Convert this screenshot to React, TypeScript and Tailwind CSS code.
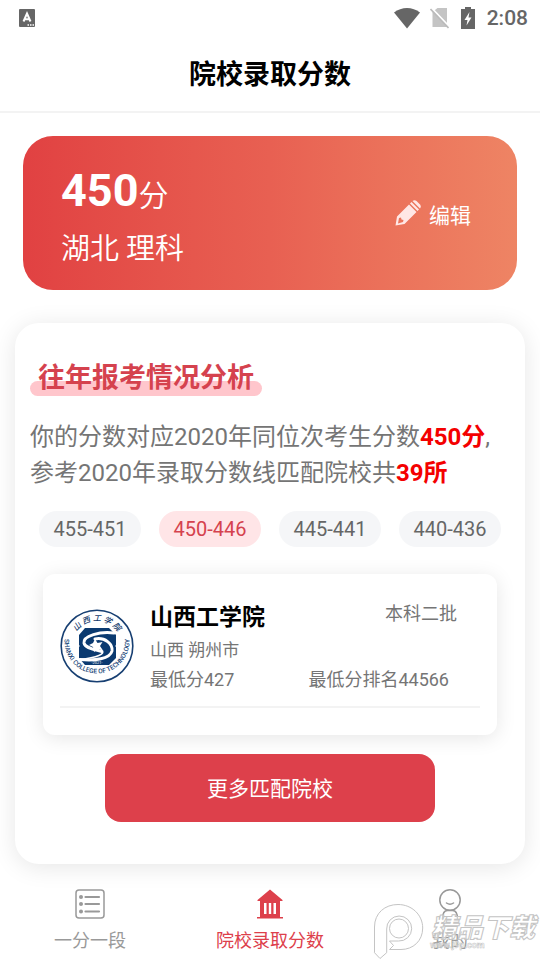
import { useState } from "react";

const ranges = ["455-451", "450-446", "445-441", "440-436"];

function StatusBar() {
  return (
    <div className="flex h-9 items-center justify-between pl-[19px] pr-3 text-[#666]">
      <svg width="16" height="18" viewBox="0 0 16 18">
        <rect width="16" height="18" rx="1" fill="#666" />
        <path d="M4.500 12.500 8 4.500l3.500 8M5.500 10.200h5" fill="none" stroke="#fff" strokeWidth="2" />
        <path d="M8.500 16h1.500m1 0h1.500m1 0h1.500" stroke="#fff" strokeWidth="1.400" />
      </svg>
      <div className="flex items-center">
        <svg width="26" height="22" viewBox="0 0 26 22">
          <path d="M0 5.500C7.500-.5 18.500-.5 26 5.500L13 21.500Z" fill="#666" />
        </svg>
        <svg className="ml-2.5" width="19" height="22" viewBox="0 0 19 22">
          <path d="M2.500 5 7.500 1H17v19H2.500Z" fill="#c4c4c4" />
          <path d="M1 .5 19.500 20" stroke="#fff" strokeWidth="2" />
          <path d="M.5 2 18.500 21" stroke="#bbb" strokeWidth="1.600" />
        </svg>
        <svg className="ml-3" width="14" height="22" viewBox="0 0 14 22">
          <path d="M4 0h6v2h4v20H0V2h4Z" fill="#666" />
          <path d="M8.500 5 3.500 13H6.500L5.500 18.500l5-8h-3Z" fill="#fff" />
        </svg>
        <span className="ml-3 text-[21px] font-medium leading-6">2:08</span>
      </div>
    </div>
  );
}

function PencilIcon() {
  return (
    <svg width="26" height="26" viewBox="0 0 26 26" fill="#ffe7e5">
      <path
        fillRule="evenodd"
        d="M.5 25.500 2 16.500 14 4.500l7.500 7.500-12 12ZM4 18l-1 5.500 5-1.500.5-2-2-.5-.5-2Z"
      />
      <path d="m15 3.500 1.500-1.500 7.500 7.500-1.500 1.500Z" />
      <path d="M17.500 1q2-1.500 4 0L25 4.500q1.500 2 0 4Z" />
    </svg>
  );
}

function CollegeLogo() {
  return (
    <svg className="mt-[7px] shrink-0" width="74" height="74" viewBox="0 0 74 74">
      <circle cx="37" cy="37" r="35.800" fill="#fff" stroke="#173f72" strokeWidth="1.600" />
      <path d="M25 19h24l7 7v23l-7 7H25l-6-7V26Z" fill="#0b3a70" />
      <g fill="none" stroke="#fff" strokeLinecap="round">
        <path d="M54 24C40 22 23 27 24 34c1 5 9 6 18 8.500" strokeWidth="3" />
        <path d="M35 30c10-2 18 5 17 12-2 8-17 10-32 8.500" strokeWidth="3" />
        <path d="M42 42.500c3 2-4 6-22 8" strokeWidth="1.500" />
        <path d="M19 37h-3M56 37h3" strokeWidth="1.500" />
      </g>
      <path d="m35 30 2.500 4 5-1-2.500 4 3 4.500-5-1.500-4 3-1-5-4-2 4-2Z" fill="#fff" />
      <text x="37" y="55" textAnchor="middle" fontSize="4" fill="#fff">·2021·</text>
      <defs>
        <path id="ring-top" d="M12 37a25 25 0 0 1 50 0" />
        <path id="ring-bottom" d="M4.500 32a32.500 32.500 0 0 0 65 0" />
      </defs>
      <text fontSize="8" fontWeight="500" fill="#12396c" fontStyle="italic">
        <textPath href="#ring-top" startOffset="50%" textAnchor="middle">
          山 西 工 学 院
        </textPath>
      </text>
      <text fontSize="6.500" fontWeight="500" fill="#23487a">
        <textPath href="#ring-bottom" startOffset="50%" textAnchor="middle">
          SHANXI COLLEGE OF TECHNOLOGY
        </textPath>
      </text>
    </svg>
  );
}

function ListIcon() {
  return (
    <svg width="30" height="30" viewBox="0 0 30 30" fill="none" stroke="#999" strokeLinecap="round">
      <rect x="1" y="1" width="28" height="28" rx="3" strokeWidth="1.500" />
      <path d="M10.500 8H24M10.500 15H24M10.500 22.500H24" strokeWidth="2.200" />
      <path d="M6 8h.01M6 15h.01M6 22.500h.01" strokeWidth="4" />
    </svg>
  );
}

function SchoolIcon() {
  return (
    <svg width="30" height="30" viewBox="0 0 30 30">
      <path
        fillRule="evenodd"
        fill="#dd404b"
        d="M15 .5 27.500 11v1H25v16h3v1.500H2V28h3V12H2.500v-1ZM9 14v11h2.500V14Zm4.800 0v11h2.400V14Zm4.700 0v11H21V14Z"
      />
    </svg>
  );
}

function UserIcon() {
  return (
    <svg width="30" height="30" viewBox="0 0 30 30" fill="none" stroke="#999" strokeWidth="1.500" strokeLinecap="round">
      <circle cx="15" cy="11" r="10.200" />
      <path d="M11.500 14q3.500 2.500 7 0M7.500 30c0-6 2-8.500 5-8.500h5c3 0 5 2.500 5 8.500" />
    </svg>
  );
}

function Watermark() {
  return (
    <svg
      className="pointer-events-none absolute bottom-0 right-0"
      width="168"
      height="60"
      viewBox="0 0 168 60"
      fill="#fff"
      fillOpacity="0.55"
      stroke="#c4c4c4"
      strokeWidth="1"
    >
      <path d="M2.500 51.700V26C2.500 12 13 3.500 26 3.500c14 0 24.700 10.500 24.700 23.500S41 48.500 29 48.500H17.500l4-4-4-4.500h9A12.500 12.500 0 1 0 14.700 28v23.700L8 57.500Z" />
      <circle cx="27" cy="27.500" r="9.500" />
      <text x="59" y="36" fontSize="26" fontWeight="900" fontStyle="italic">精品下载</text>
      <text x="58" y="47" fontSize="9" strokeWidth="0.500" fontWeight="700">www.j9p.com</text>
    </svg>
  );
}

const tabs = [
  { label: "一分一段", icon: <ListIcon /> },
  { label: "院校录取分数", icon: <SchoolIcon /> },
  { label: "我的", icon: <UserIcon /> },
];

export default function App() {
  const [range, setRange] = useState("450-446");
  const [tab, setTab] = useState("院校录取分数");

  return (
    <div className="flex min-h-screen flex-col bg-white font-[Roboto,'Noto_Sans_CJK_SC',sans-serif] text-[#757575]">
      <StatusBar />
      <header className="border-b-2 border-[#f3f3f3] pb-[17px] pt-5">
        <h1 className="text-center text-[27px] font-bold leading-[38px] text-black">院校录取分数</h1>
      </header>

      <main className="flex-1">
        <section className="mx-[23px] mt-[23px] flex items-center justify-between rounded-[30px] bg-linear-to-r from-[#e14142] via-[#e86052] to-[#ee8464] pb-[15px] pl-[38px] pr-[46px] pt-7 text-white">
          <div>
            <p className="text-[30px] font-[350] leading-[54px]">
              <strong className="text-[45px] font-bold">450</strong>分
            </p>
            <p className="text-[29px] font-[350] leading-[52px]">湖北 理科</p>
          </div>
          <button className="mb-2 flex items-start gap-2 text-[21px] leading-8">
            <PencilIcon />
            编辑
          </button>
        </section>

        <section className="mx-[15px] mt-[33px] rounded-3xl px-[15px] pb-[42px] pt-[37px] shadow-[0_3px_24px_rgba(0,0,0,0.1)]">
          <h2 className="relative inline-block px-2 text-[27px] font-bold leading-9 text-[#d5424e]">
            <span className="absolute inset-x-0 bottom-0 h-[15px] rounded-full bg-[#ffc6cc]" />
            <span className="relative">往年报考情况分析</span>
          </h2>
          <p className="mt-[23px] text-2xl leading-9">
            你的分数对应2020年同位次考生分数<strong className="font-bold text-[#f40000]">450分</strong>,
            <br />
            参考2020年录取分数线匹配院校共<strong className="font-bold text-[#f40000]">39所</strong>
          </p>

          <div className="mt-5 flex justify-between gap-[18px] px-[9px]">
            {ranges.map((item) => (
              <button
                key={item}
                onClick={() => setRange(item)}
                className={`h-9 flex-1 rounded-full text-xl leading-9 ${
                  item === range ? "bg-[#ffe5e7] text-[#d5424e]" : "bg-[#f5f6f8] text-[#666]"
                }`}
              >
                {item}
              </button>
            ))}
          </div>

          <article className="mx-[13px] mt-[27px] rounded-xl px-[17px] pb-[27px] pt-7 shadow-[0_3px_20px_rgba(0,0,0,0.1)]">
            <div className="flex items-start gap-4 border-b-2 border-[#f3f3f3] pb-3">
              <CollegeLogo />
              <div className="flex-1">
                <div className="flex justify-between pr-[23px]">
                  <h3 className="text-[23px] font-bold leading-8 text-black">山西工学院</h3>
                  <span className="text-lg leading-6">本科二批</span>
                </div>
                <p className="text-[17px] leading-8">山西 朔州市</p>
                <div className="flex justify-between pr-[31px] text-lg leading-7">
                  <span>最低分427</span>
                  <span>最低分排名44566</span>
                </div>
              </div>
            </div>
          </article>

          <button className="mx-auto mt-[19px] block h-[68px] w-[330px] max-w-full rounded-2xl bg-[#dd404b] pt-1 text-[21px] text-white">
            更多匹配院校
          </button>
        </section>
      </main>

      <nav className="relative grid grid-cols-3 pb-1.5 pt-[25px]">
        {tabs.map(({ label, icon }) => (
          <button
            key={label}
            onClick={() => setTab(label)}
            className={`flex flex-col items-center gap-2 text-lg leading-7 ${tab === label ? "text-[#dd404b]" : "text-[#999]"}`}
          >
            {icon}
            {label}
          </button>
        ))}
        <Watermark />
      </nav>
    </div>
  );
}
